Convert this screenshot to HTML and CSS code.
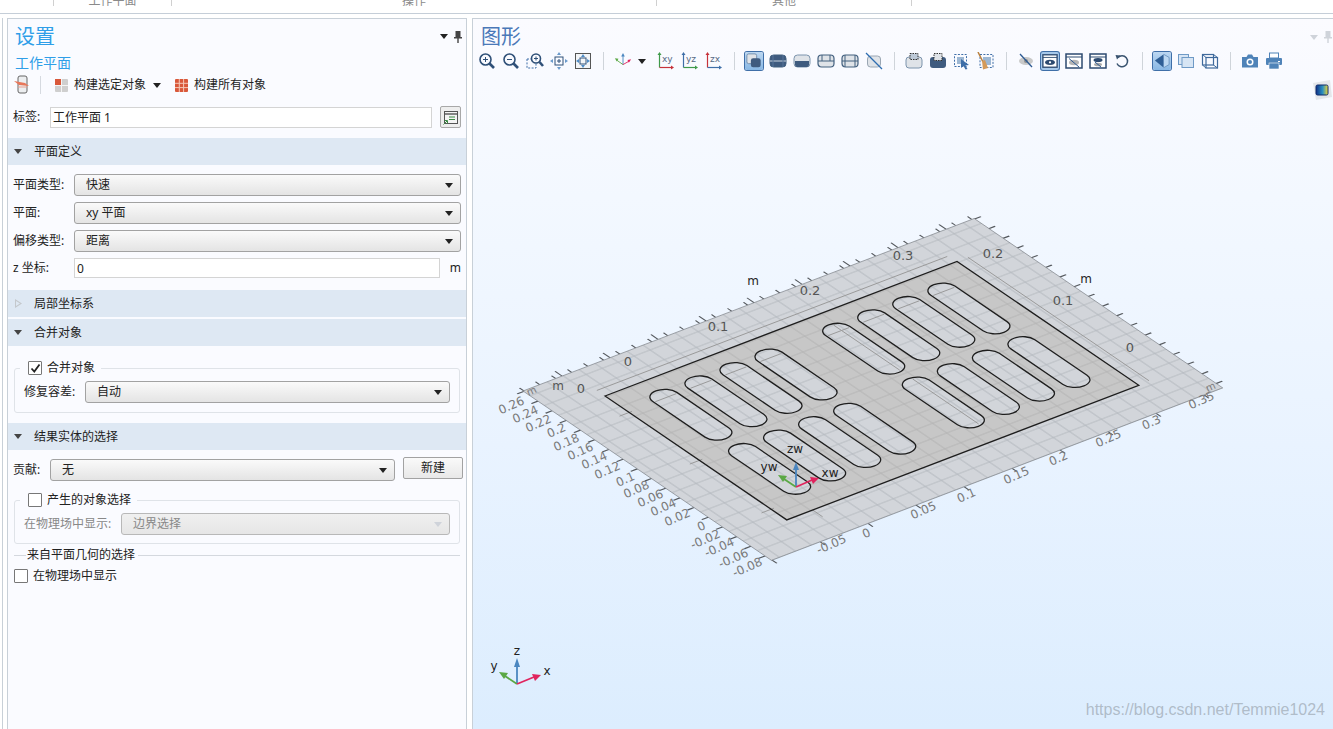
FILE: index.html
```html
<!DOCTYPE html>
<html lang="zh-CN">
<head>
    <meta charset="UTF-8">
    <meta name="viewport" content="width=device-width, initial-scale=1.0">
    <title>工作平面 - 图形</title>
    <link rel="stylesheet" href="styles.css">
</head>
<body>
    <svg class="defs" width="0" height="0">
        <defs>
            <symbol id="cyl" viewBox="0 0 18 18">
                <rect x="1" y="3" width="16" height="12" rx="3.5" fill="#dfe3e8" stroke="#43607f" stroke-width="1.2"/>
            </symbol>
            <pattern id="sheetGrid" patternUnits="userSpaceOnUse" x="-4.98" y="-4.81" width="1.667" height="2">
                <rect width="1.667" height="2" fill="#d2d5da"/>
                <path d="M0 1H1.667M0.833 0V2" stroke="#b4b9bf" stroke-width="0.1" fill="none"/>
            </pattern>
            <pattern id="plateGrid" patternUnits="userSpaceOnUse" x="-4.98" y="-4.81" width="1.667" height="2">
                <rect width="1.667" height="2" fill="#c7c7c7"/>
                <path d="M0 1H1.667M0.833 0V2" stroke="#b4b4b4" stroke-width="0.1" fill="none"/>
            </pattern>
        </defs>
    </svg>

    <div class="ribbon">
        <div class="ribbon-cell cell-a"></div>
        <div class="ribbon-cell cell-b"><span>工作平面</span></div>
        <div class="ribbon-cell cell-c"><span>操作</span></div>
        <div class="ribbon-cell cell-d"><span>其他</span></div>
        <div class="ribbon-cell cell-e"></div>
    </div>

    <div class="workspace">
        <div class="sliver"></div>

        <div class="settings">
            <div class="panel-head">
                <h1>设置</h1>
                <div class="panel-tools">
                    <i class="caret dark"></i>
                    <svg width="8" height="12" viewBox="0 0 8 12"><path d="M1.5 0H6.5V6H8V7.500H4.700V12H3.300V7.500H0V6H1.500Z" fill="#444"/></svg>
                </div>
            </div>
            <h2>工作平面</h2>

            <div class="build-bar">
                <svg class="build-first" width="16" height="20" viewBox="0 0 16 20">
                    <rect x="4" y="1" width="9" height="17" rx="2" fill="#eceef0" stroke="#666"/>
                    <path d="M0 6L11 8L15 11L5 10Z" fill="#e8775a"/>
                    <path d="M4 12H13" stroke="#e8a090"/>
                </svg>
                <span class="build-sep"></span>
                <svg width="13" height="13" viewBox="0 0 13 13">
                    <rect width="13" height="13" rx="1" fill="#cfcfcf"/>
                    <path d="M0 0H6V6H0Z" fill="#d9583a"/>
                    <path d="M6.500 0V13M0 6.500H13" stroke="#f4f4f4"/>
                </svg>
                <span class="build-text">构建选定对象</span>
                <i class="caret dark build-caret"></i>
                <svg class="build-all" width="13" height="13" viewBox="0 0 13 13">
                    <rect width="13" height="13" rx="1" fill="#d9583a"/>
                    <path d="M4.300 0V13M8.600 0V13M0 4.300H13M0 8.600H13" stroke="#f6c8b8"/>
                </svg>
                <span class="build-text">构建所有对象</span>
            </div>

            <div class="row row-label">
                <label class="lbl-short">标签:</label>
                <div class="field grow">工作平面 1</div>
                <div class="note-btn">
                    <svg width="15" height="15" viewBox="0 0 15 15">
                        <rect x="1.500" y="1.500" width="13" height="12" fill="#f4f4f4" stroke="#555"/>
                        <path d="M1.500 4H14.500" stroke="#555" stroke-width="1.400"/>
                        <path d="M6 7H12M6 9.500H12" stroke="#3d8a45"/>
                        <path d="M0.500 14.500L4 11M1.500 10.500H4.500V13.500" stroke="#3d8a45" fill="none"/>
                    </svg>
                </div>
            </div>

            <div class="section-head first"><i class="tri-down"></i>平面定义</div>
            <div class="form">
                <div class="row">
                    <label class="lbl">平面类型:</label>
                    <div class="select grow">快速<i class="caret dark"></i></div>
                </div>
                <div class="row">
                    <label class="lbl">平面:</label>
                    <div class="select grow">xy 平面<i class="caret dark"></i></div>
                </div>
                <div class="row">
                    <label class="lbl">偏移类型:</label>
                    <div class="select grow">距离<i class="caret dark"></i></div>
                </div>
                <div class="row row-z">
                    <label class="lbl">z 坐标:</label>
                    <div class="field grow z-field">0</div>
                    <span class="unit">m</span>
                </div>
            </div>

            <div class="section-head local"><i class="tri-right"></i>局部坐标系</div>
            <div class="section-head merge"><i class="tri-down"></i>合并对象</div>

            <div class="group merge-group">
                <div class="legend">
                    <span class="check on">
                        <svg width="11" height="11" viewBox="0 0 11 11"><path d="M1.500 5.500L4.300 8.500L9.500 1.500" fill="none" stroke="#222" stroke-width="1.800"/></svg>
                    </span>
                    合并对象
                </div>
                <div class="row">
                    <label class="lbl-repair">修复容差:</label>
                    <div class="select grow">自动<i class="caret dark"></i></div>
                </div>
            </div>

            <div class="section-head result"><i class="tri-down"></i>结果实体的选择</div>
            <div class="row row-contrib">
                <label class="lbl-short">贡献:</label>
                <div class="select grow sel-none">无<i class="caret dark"></i></div>
                <div class="btn">新建</div>
            </div>

            <div class="group select-group">
                <div class="legend"><span class="check"></span>产生的对象选择</div>
                <div class="row">
                    <label class="lbl-phys">在物理场中显示:</label>
                    <div class="select grow disabled">边界选择<i class="caret pale"></i></div>
                </div>
            </div>

            <div class="divider-title"><span>来自平面几何的选择</span></div>
            <div class="check-row"><span class="check"></span>在物理场中显示</div>
        </div>

        <div class="graphics">
            <svg class="scene" width="861" height="711" viewBox="472 18 861 711">
                <g transform="matrix(9.6 -3.67 7.1 4.84 605 396)">
                    <g class="ticks">
                        <line x1="-4.98" y1="-5.1" x2="42" y2="-5.1" stroke-width="0.6" stroke-dasharray="0.13 1.537"/>
                        <line x1="-0.98" y1="-5.3" x2="42" y2="-5.3" stroke-width="1" stroke-dasharray="0.13 4.87"/>
                        <line x1="42.3" y1="-4.81" x2="42.3" y2="30.19" stroke-width="0.7" stroke-dasharray="0.17 1.83"/>
                        <line x1="-5.3" y1="-4.81" x2="-5.3" y2="30.19" stroke-width="0.7" stroke-dasharray="0.17 1.83"/>
                        <line x1="-4.98" y1="30.5" x2="42" y2="30.5" stroke-width="0.7" stroke-dasharray="0.13 4.87"/>
                    </g>
                    <rect class="sheet" x="-4.98" y="-4.81" width="47" height="35" fill="url(#sheetGrid)"/>
                    <path class="ruler" d="M0 -1.15H36.500M37.800 0V25.500"/>
                    <rect class="plate" x="0" y="0" width="36.670" height="25.600" fill="url(#plateGrid)"/>
                    <g class="slots">
                        <rect x="2.650" y="1.900" width="2.500" height="9.850" rx="1.250" ry="1.250"/>
                        <rect x="6.300" y="1.900" width="2.500" height="9.850" rx="1.250" ry="1.250"/>
                        <rect x="9.950" y="1.900" width="2.500" height="9.850" rx="1.250" ry="1.250"/>
                        <rect x="13.600" y="1.900" width="2.500" height="9.850" rx="1.250" ry="1.250"/>
                        <rect x="2.600" y="13.050" width="2.500" height="9.850" rx="1.250" ry="1.250"/>
                        <rect x="6.250" y="13.050" width="2.500" height="9.850" rx="1.250" ry="1.250"/>
                        <rect x="9.900" y="13.050" width="2.500" height="9.850" rx="1.250" ry="1.250"/>
                        <rect x="13.550" y="13.050" width="2.500" height="9.850" rx="1.250" ry="1.250"/>
                        <rect x="20.650" y="1.900" width="2.500" height="9.850" rx="1.250" ry="1.250"/>
                        <rect x="24.300" y="1.900" width="2.500" height="9.850" rx="1.250" ry="1.250"/>
                        <rect x="27.950" y="1.900" width="2.500" height="9.850" rx="1.250" ry="1.250"/>
                        <rect x="31.610" y="1.900" width="2.500" height="9.850" rx="1.250" ry="1.250"/>
                        <rect x="20.700" y="13.050" width="2.500" height="9.850" rx="1.250" ry="1.250"/>
                        <rect x="24.350" y="13.050" width="2.500" height="9.850" rx="1.250" ry="1.250"/>
                        <rect x="28" y="13.050" width="2.500" height="9.850" rx="1.250" ry="1.250"/>
                        <rect x="31.700" y="13.050" width="2.500" height="9.850" rx="1.250" ry="1.250"/>
                    </g>
                    <path class="ruler" d="M2.800 3.300H5M6.450 3.300H8.650M10.100 3.300H12.300M13.750 3.300H15.950M20.800 3.300H23M24.450 3.300H26.650M28.100 3.300H30.300M31.750 3.300H33.950M22.200 2.200V11.500M22.200 13.300V22.600"/>
                    <path class="ruler" d="M-1 3.400H0.300M-1 13.300H0.300M-1 23.400H0.300M2.700 25.600V27"/>
                    <rect class="plate-edge" x="0" y="0" width="36.670" height="25.600"/>
                </g>

                <g class="tick-label">
                    <text x="628" y="366">0</text><text x="718" y="331">0.1</text><text x="810" y="295">0.2</text><text x="903" y="260">0.3</text>
                    <text x="993" y="258">0.2</text><text x="1063" y="305">0.1</text><text x="1130" y="352">0</text><text x="581" y="393">0</text>
                    <text x="558" y="390" class="small">m</text>
                </g>
                <g class="tick-label rotated">
                    <text transform="translate(513 409) rotate(-24)">0.26</text>
                    <text transform="translate(527 418) rotate(-24)">0.24</text>
                    <text transform="translate(540 427) rotate(-24)">0.22</text>
                    <text transform="translate(558 434) rotate(-24)">0.2</text>
                    <text transform="translate(568 446) rotate(-24)">0.18</text>
                    <text transform="translate(582 455) rotate(-24)">0.16</text>
                    <text transform="translate(596 464) rotate(-24)">0.14</text>
                    <text transform="translate(609 474) rotate(-24)">0.12</text>
                    <text transform="translate(627 483) rotate(-24)">0.1</text>
                    <text transform="translate(638 493) rotate(-24)">0.08</text>
                    <text transform="translate(652 502) rotate(-24)">0.06</text>
                    <text transform="translate(665 511) rotate(-24)">0.04</text>
                    <text transform="translate(679 521) rotate(-24)">0.02</text>
                    <text transform="translate(703 530) rotate(-24)">0</text>
                    <text transform="translate(707 543) rotate(-24)">-0.02</text>
                    <text transform="translate(721 551) rotate(-24)">-0.04</text>
                    <text transform="translate(735 562) rotate(-24)">-0.06</text>
                    <text transform="translate(749 571) rotate(-24)">-0.08</text>
                    <text transform="translate(833 548) rotate(-24)">-0.05</text>
                    <text transform="translate(868 537) rotate(-24)">0</text>
                    <text transform="translate(925 514) rotate(-24)">0.05</text>
                    <text transform="translate(968 499) rotate(-24)">0.1</text>
                    <text transform="translate(1018 479) rotate(-24)">0.15</text>
                    <text transform="translate(1060 462) rotate(-24)">0.2</text>
                    <text transform="translate(1110 442) rotate(-24)">0.25</text>
                    <text transform="translate(1153 426) rotate(-24)">0.3</text>
                    <text transform="translate(1203 404) rotate(-24)">0.35</text>
                    <text transform="translate(533 394) rotate(-24)" class="tiny">m</text>
                    <text transform="translate(1212 390) rotate(-24)" class="tiny">m</text>
                </g>
                <g class="axis-label">
                    <text x="753" y="285">m</text><text x="1086" y="283">m</text>
                    <text x="795" y="453">zw</text><text x="769" y="471">yw</text><text x="830" y="477">xw</text>
                    <text x="517" y="655">z</text><text x="494" y="670">y</text><text x="547" y="675">x</text>
                </g>

                <g class="triad">
                    <path d="M796 487V468" stroke="#4a86c0"/><path d="M796 462L799 470H793Z" fill="#4a86c0"/>
                    <path d="M796 487L784 479" stroke="#5aa845"/><path d="M778 475L787 476L783 482Z" fill="#5aa845"/>
                    <path d="M796 487L812 480" stroke="#e0245e"/><path d="M819 478L813 484L810 477Z" fill="#e0245e"/>
                    <path d="M517 684V665" stroke="#4a86c0"/><path d="M517 658L520 667H514Z" fill="#4a86c0"/>
                    <path d="M517 684L505 676" stroke="#5aa845"/><path d="M499 672L508 673L504 679Z" fill="#5aa845"/>
                    <path d="M517 684L534 677" stroke="#e0245e"/><path d="M541 675L535 681L532 674Z" fill="#e0245e"/>
                </g>
            </svg>

            <div class="graphics-head">
                <h1>图形</h1>
                <div class="panel-tools pale-tools">
                    <i class="caret pale"></i>
                    <svg width="8" height="12" viewBox="0 0 8 12"><path d="M1.5 0H6.5V6H8V7.500H4.700V12H3.300V7.500H0V6H1.500Z" fill="#cfd3da"/></svg>
                </div>
            </div>

            <div class="toolbar">
                <span class="tool"><svg viewBox="0 0 18 18"><circle cx="7.500" cy="7.500" r="5.500" class="ln"/><path d="M11.500 11.500L16 16" class="hd"/><path d="M5 7.500H10M7.500 5V10" class="ln thin"/></svg></span>
                <span class="tool"><svg viewBox="0 0 18 18"><circle cx="7.500" cy="7.500" r="5.500" class="ln"/><path d="M11.500 11.500L16 16" class="hd"/><path d="M5 7.500H10" class="ln thin"/></svg></span>
                <span class="tool"><svg viewBox="0 0 18 18"><rect x="1" y="7" width="9" height="9" class="dash"/><circle cx="10" cy="6.500" r="4.500" class="ln wh"/><path d="M13.500 10L17 14" class="hd"/><path d="M8 6.500H12M10 4.500V8.500" class="ln thin"/></svg></span>
                <span class="tool"><svg viewBox="0 0 18 18"><rect x="5" y="5" width="8" height="8" class="ln thin"/><path d="M7 9H11M9 7V11" class="ln thin"/><path d="M9 0L11 3H7ZM9 18L7 15H11ZM0 9L3 7V11ZM18 9L15 11V7Z" fill="#6a9acb"/></svg></span>
                <span class="tool"><svg viewBox="0 0 18 18"><rect x="1.500" y="1.500" width="15" height="15" fill="#f3f5f8" stroke="#555"/><rect x="6" y="6" width="6" height="6" class="ln thin"/><path d="M9 2L11 5H7ZM9 16L7 13H11ZM2 9L5 7V11ZM16 9L13 11V7Z" fill="#4f8cc7"/></svg></span>
                <span class="sep"></span>
                <span class="tool"><svg viewBox="0 0 20 18"><path d="M10 13V2" stroke="#4a86c0"/><path d="M10 0L12 4H8Z" fill="#4a86c0"/><path d="M10 13L3 8" stroke="#5aa845"/><path d="M1 6L5 6.500L3 9.500Z" fill="#5aa845"/><path d="M10 13L17 9" stroke="#e0245e"/><path d="M19 7L16.500 11L15 8Z" fill="#e0245e"/></svg></span>
                <i class="caret dark axis-caret"></i>
                <span class="tool first-view"><svg viewBox="0 0 18 18"><path class="ax-line" d="M2.500 2V15.500" stroke="#3f9a4a"/><path class="ax-line" d="M2.500 15.500H15" stroke="#c7323a"/><path d="M2.500 0L4.500 3H0.500Z" fill="#3f9a4a"/><path d="M17 15.500L14 17.500V13.500Z" fill="#c7323a"/><text x="5" y="10" class="ax">xy</text></svg></span>
                <span class="tool"><svg viewBox="0 0 18 18"><path class="ax-line" d="M2.500 2V15.500" stroke="#3e6ea8"/><path class="ax-line" d="M2.500 15.500H15" stroke="#3f9a4a"/><path d="M2.500 0L4.500 3H0.500Z" fill="#3e6ea8"/><path d="M17 15.500L14 17.500V13.500Z" fill="#3f9a4a"/><text x="5" y="10" class="ax">yz</text></svg></span>
                <span class="tool"><svg viewBox="0 0 18 18"><path class="ax-line" d="M2.500 2V15.500" stroke="#c7323a"/><path class="ax-line" d="M2.500 15.500H15" stroke="#3e6ea8"/><path d="M2.500 0L4.500 3H0.500Z" fill="#c7323a"/><path d="M17 15.500L14 17.500V13.500Z" fill="#3e6ea8"/><text x="5" y="10" class="ax">zx</text></svg></span>
                <span class="sep"></span>
                <span class="tool on"><svg viewBox="0 0 18 18"><rect x="1" y="1" width="11" height="11" rx="2" fill="#dfe3e8" stroke="#6f8aa8"/><rect x="5.500" y="6" width="11" height="10" rx="2.500" fill="#3f5b7f"/></svg></span>
                <span class="tool"><svg viewBox="0 0 18 18"><rect x="1" y="3" width="16" height="12" rx="3.500" fill="#3f5b7f" stroke="#43607f"/><path d="M1 9H17" stroke="#c9d4e0"/><path d="M4 3V15M14 3V15" stroke="#56749a"/></svg></span>
                <span class="tool"><svg viewBox="0 0 18 18"><rect x="1" y="3" width="16" height="12" rx="3.500" fill="#dfe3e8" stroke="#7d94ad"/><path d="M2 9H16V12.500Q16 15 14 15H4Q2 15 2 12.500Z" fill="#3f5b7f"/></svg></span>
                <span class="tool"><svg viewBox="0 0 18 18"><use href="#cyl"/><path d="M1 9H17M5 3V9M13 3V9" stroke="#43607f"/></svg></span>
                <span class="tool"><svg viewBox="0 0 18 18"><use href="#cyl"/><path d="M1 9H17M4 3V15M14 3V15" stroke="#43607f"/></svg></span>
                <span class="tool"><svg viewBox="0 0 18 18"><rect x="2.500" y="4" width="13" height="11" rx="3" fill="#dfe3e8" stroke="#9aa6b3"/><path d="M1 1L17 17" stroke="#2d6cb0" stroke-width="1.300"/></svg></span>
                <span class="sep"></span>
                <span class="tool"><svg viewBox="0 0 18 18"><rect x="1" y="5" width="16" height="11" rx="3" fill="#dfe3e8" stroke="#7d94ad"/><rect x="5" y="1.500" width="8" height="6" fill="#bcc8d6" stroke="#333" stroke-dasharray="1.500 1"/></svg></span>
                <span class="tool"><svg viewBox="0 0 18 18"><rect x="1" y="5" width="16" height="11" rx="3" fill="#3f5b7f"/><rect x="5" y="1.500" width="8" height="7" fill="#dfe3e8" stroke="#333" stroke-dasharray="1.500 1"/></svg></span>
                <span class="tool"><svg viewBox="0 0 18 18"><rect x="1.500" y="2.500" width="12" height="12" class="dash"/><rect x="4" y="5" width="7" height="7" fill="#9db7d3"/><path d="M8 7L16 13L12.500 13.500L14.500 17L12.500 17.500L10.500 14L8 16Z" fill="#3e6ea8"/></svg></span>
                <span class="tool"><svg viewBox="0 0 18 18"><rect x="3" y="2.500" width="13" height="13" class="dash"/><rect x="6" y="5" width="8" height="8" fill="#9db7d3"/><path d="M1 0L6 10" stroke="#b9803f" stroke-width="1.500"/><path d="M5 9L8 8L11 16L6 17.500Z" fill="#d49a5a"/></svg></span>
                <span class="sep"></span>
                <span class="tool"><svg viewBox="0 0 18 18"><ellipse cx="9" cy="9" rx="7" ry="4" fill="#c9c9c9"/><circle cx="9" cy="9" r="2" fill="#8f8f8f"/><path d="M3 2L15 15" stroke="#2d5a92" stroke-width="1.300"/></svg></span>
                <span class="tool on dark-frame"><svg viewBox="0 0 18 18"><rect x="1" y="2" width="16" height="14" fill="#fff" stroke="#2d4a70" stroke-width="1.500"/><path d="M1 5H17" stroke="#2d4a70"/><ellipse cx="9" cy="10.500" rx="5.500" ry="3" fill="#2d4a70"/><circle cx="9" cy="10.500" r="1.300" fill="#fff"/></svg></span>
                <span class="tool"><svg viewBox="0 0 18 18"><rect x="1" y="2" width="16" height="14" fill="#fff" stroke="#2d4a70" stroke-width="1.500"/><path d="M1 5H17" stroke="#2d4a70"/><ellipse cx="9" cy="10.500" rx="5" ry="2.800" fill="#b5b5b5"/><path d="M4 6.500L14 15" stroke="#2d5a92"/></svg></span>
                <span class="tool"><svg viewBox="0 0 18 18"><rect x="1" y="2" width="16" height="14" fill="#fff" stroke="#2d4a70" stroke-width="1.500"/><path d="M1 5H17" stroke="#2d4a70"/><ellipse cx="9" cy="8" rx="4.500" ry="2" fill="#2d4a70"/><ellipse cx="9" cy="12.500" rx="4" ry="1.800" fill="#aaa"/><path d="M6 10L12 15" stroke="#2d5a92"/></svg></span>
                <span class="tool"><svg viewBox="0 0 18 18"><path d="M5 5.500A5.500 5.500 0 1 1 4 11.500" fill="none" stroke="#39536f" stroke-width="1.500"/><path d="M2.500 3L7.500 3.500L4 7.500Z" fill="#39536f"/></svg></span>
                <span class="sep"></span>
                <span class="tool on"><svg viewBox="0 0 18 18"><path d="M1 8.500L11 1.500V16.500Z" fill="#2f5f96"/><path d="M11 1.500L17 5V13L11 16.500" fill="#bcd8f2" stroke="#6b94bd"/><rect x="5" y="7" width="5" height="4" fill="#2f5f96"/></svg></span>
                <span class="tool"><svg viewBox="0 0 18 18"><rect x="1.500" y="2.500" width="10" height="10" fill="#d7e5f4" stroke="#6f9ac6"/><rect x="5" y="5.500" width="11.500" height="10" fill="#d7e5f4" stroke="#6f9ac6"/></svg></span>
                <span class="tool"><svg viewBox="0 0 18 18"><rect x="1.500" y="2.500" width="11" height="10.500" fill="none" stroke="#3f6a9c" stroke-width="1.200"/><rect x="5" y="5.500" width="11.500" height="10.500" fill="none" stroke="#3f6a9c" stroke-width="1.200"/><path d="M1.500 2.500L5 5.500M12.500 2.500L16.500 5.500M1.500 13L5 16M12.500 13L16.500 16" stroke="#3f6a9c"/></svg></span>
                <span class="sep"></span>
                <span class="tool"><svg viewBox="0 0 18 18"><path d="M1 5H5.500L7 2.500H11L12.500 5H17V15.500H1Z" fill="#4f83b8"/><circle cx="9" cy="10" r="3.500" fill="#fff"/><circle cx="9" cy="10" r="2" fill="#4f83b8"/></svg></span>
                <span class="tool"><svg viewBox="0 0 18 18"><rect x="4.500" y="1" width="9" height="5" fill="#fff" stroke="#4f83b8"/><rect x="1" y="6" width="16" height="7" rx="1" fill="#4f83b8"/><rect x="4" y="11" width="10" height="6" fill="#4f83b8" stroke="#fff" stroke-width="0.600"/><rect x="13" y="9" width="2" height="1" fill="#fff"/></svg></span>
            </div>

            <div class="color-chip">
                <svg width="22" height="22" viewBox="0 0 22 22">
                    <defs>
                        <linearGradient id="chipFill" x1="0" y1="0" x2="1" y2="0">
                            <stop offset="0" stop-color="#0f2f86"/>
                            <stop offset="0.550" stop-color="#2a8fc0"/>
                            <stop offset="1" stop-color="#f2d730"/>
                        </linearGradient>
                    </defs>
                    <path d="M2 4L19 1L21 18L5 21Z" fill="#e4e6ea"/>
                    <rect x="5" y="6" width="12" height="10" rx="1.500" fill="url(#chipFill)" stroke="#0f2b6b"/>
                </svg>
            </div>

            <div class="watermark">https://blog.csdn.net/Temmie1024</div>
        </div>
    </div>
</body>
</html>
```

FILE: styles.css
```css
* {
    box-sizing: border-box;
}
html, body {
    margin: 0;
    height: 100%;
    overflow: hidden;
}
body {
    background: #ffffff;
    color: #222;
    font-family: "Noto Sans", "Noto Sans CJK SC", sans-serif;
    font-size: 12px;
    line-height: 16px;
}
h1, h2 {
    margin: 0;
    font-weight: normal;
}
.defs {
    position: absolute;
}

/* ribbon, only the cut off bottom is on screen */
.ribbon {
    display: flex;
    height: 14px;
    overflow: hidden;
    border-bottom: 1px solid #c5ced8;
}
.ribbon-cell {
    height: 6px;
    text-align: center;
    color: #8a8a8a;
    border-right: 1px solid #d0d0d0;
}
.ribbon-cell span {
    display: block;
    margin-top: -7px;
}
.cell-a { width: 54px; }
.cell-b { width: 118px; }
.cell-c { width: 485px; }
.cell-d { width: 255px; }
.cell-e { flex: 1; border-right: none; }

.workspace {
    display: flex;
    height: 715px;
    padding-top: 4px;
}
.sliver {
    width: 3px;
    margin-right: 4px;
    border-right: 1px solid #c8d0d8;
}

/* settings panel */
.settings {
    width: 460px;
    margin-right: 5px;
    background: #fafbff;
    border: 1px solid #c8d0d8;
    border-bottom: none;
}
.panel-head {
    display: flex;
    justify-content: space-between;
    align-items: center;
    height: 36px;
    padding: 0 4px 0 7px;
}
.panel-head h1, .graphics-head h1 {
    font-size: 20px;
    line-height: 28px;
    color: #2f9ee8;
}
.panel-tools {
    display: flex;
    align-items: center;
    gap: 6px;
    margin-top: -1px;
}
h2 {
    font-size: 14px;
    line-height: 18px;
    margin-top: -1px;
    padding-left: 7px;
    color: #2f9ee8;
}
.caret {
    display: inline-block;
    width: 0;
    height: 0;
    border-left: 4px solid transparent;
    border-right: 4px solid transparent;
    border-top: 5px solid #333;
}
.caret.dark { border-top-color: #222; }
.caret.pale { border-top-color: #cfd3da; }

.build-bar {
    display: flex;
    align-items: center;
    height: 20px;
    margin-top: 3px;
    padding-left: 6px;
}
.build-sep {
    width: 1px;
    height: 18px;
    margin: 0 14px 0 10px;
    background: #d6dae0;
}
.build-first { flex: none; }
.build-text {
    margin-left: 6px;
}
.build-caret {
    margin-left: 7px;
}
.build-all {
    margin-left: 14px;
}

.row {
    display: flex;
    align-items: center;
}
.grow {
    flex: 1;
    min-width: 0;
}
.row-label {
    height: 24px;
    margin-top: 10px;
    padding: 0 5px;
}
.lbl-short {
    width: 37px;
    flex: none;
}
.lbl {
    width: 61px;
    flex: none;
}
.lbl-repair {
    width: 61px;
    flex: none;
}
.lbl-phys {
    width: 97px;
    flex: none;
    color: #888;
}
.field {
    height: 21px;
    line-height: 19px;
    padding-left: 2px;
    background: #fff;
    border: 1px solid #d4d4d4;
}
.note-btn {
    display: flex;
    align-items: center;
    justify-content: center;
    width: 21px;
    height: 22px;
    margin-left: 8px;
    background: #eeeeee;
    border: 1px solid #a8a8a8;
    border-radius: 2px;
}
.section-head {
    display: flex;
    align-items: center;
    height: 27px;
    background: #dee8f3;
    padding-left: 6px;
}
.section-head.first { margin-top: 9px; }
.section-head.local { margin-top: 12px; }
.section-head.merge { margin-top: 2px; }
.section-head.result { margin-top: 10px; }
.tri-down {
    width: 0;
    height: 0;
    margin-right: 12px;
    border-left: 4px solid transparent;
    border-right: 4px solid transparent;
    border-top: 5px solid #444;
}
.tri-right {
    width: 7px;
    height: 9px;
    margin-right: 12px;
    margin-left: 1px;
    background: #c4c8cc;
    clip-path: polygon(0 0, 100% 50%, 0 100%, 0 0, 1px 2px, 1px 7px, 5px 50%, 1px 2px);
}
.form {
    padding: 9px 5px 0;
}
.form .row {
    margin-bottom: 6px;
}
.select {
    display: flex;
    align-items: center;
    justify-content: space-between;
    height: 22px;
    padding: 0 7px 0 11px;
    background: linear-gradient(#fafafa, #e4e4e4);
    border: 1px solid #a2a2a2;
    border-radius: 3px;
}
.select.disabled {
    color: #888;
    background: linear-gradient(#f0f0f0, #e6e6e6);
    border-color: #b8b8b8;
}
.row-z {
    height: 20px;
}
.form .row-z { margin-bottom: 0; }
.z-field {
    height: 20px;
    padding-left: 2px;
}
.unit {
    width: 21px;
    text-align: right;
}
.group {
    position: relative;
    margin: 0 6px;
    border: 1px solid #dfe3e8;
    border-radius: 3px;
}
.legend {
    position: absolute;
    left: 5px;
    top: -9px;
    display: flex;
    align-items: center;
    gap: 5px;
    padding: 0 6px 0 8px;
    background: #fafbff;
    line-height: 16px;
}
.merge-group {
    height: 45px;
    margin-top: 22px;
    padding: 12px 9px 0;
}
.select-group {
    height: 44px;
    margin-top: 19px;
    padding: 12px 9px 0;
}
.check {
    display: flex;
    align-items: center;
    justify-content: center;
    width: 14px;
    height: 14px;
    background: #fff;
    border: 1px solid #777;
    border-radius: 1px;
}
.row-contrib {
    margin-top: 7px;
    padding: 0 3px 0 5px;
    height: 24px;
    align-items: flex-start;
}
.row-contrib .lbl-short {
    margin-top: 5px;
}
.sel-none {
    margin-top: 2px;
}
.btn {
    width: 60px;
    height: 22px;
    margin-left: 8px;
    line-height: 19px;
    text-align: center;
    background: linear-gradient(#fafafa, #e8e8e8);
    border: 1px solid #a2a2a2;
    border-radius: 2px;
}
.divider-title {
    display: flex;
    align-items: center;
    height: 16px;
    margin: 3px 6px 0;
}
.divider-title::before {
    content: "";
    width: 12px;
    height: 1px;
    background: #d4d8de;
}
.divider-title::after {
    content: "";
    flex: 1;
    height: 1px;
    background: #d4d8de;
}
.divider-title span {
    padding: 0 3px 0 1px;
}
.check-row {
    display: flex;
    align-items: center;
    gap: 5px;
    margin: 5px 0 0 6px;
}

/* graphics window */
.graphics {
    position: relative;
    flex: 1;
    overflow: hidden;
    border: 1px solid #c8d0d8;
    border-bottom: none;
    border-right: none;
    background: linear-gradient(#fbfbff 0, #f3f8ff 25%, #e9f3ff 60%, #dcedfe 100%);
}
.scene {
    position: absolute;
    left: -1px;
    top: -1px;
}
.graphics-head {
    position: relative;
    display: flex;
    justify-content: space-between;
    align-items: center;
    height: 32px;
    padding: 4px 0 0 8px;
}
.graphics-head h1 {
    color: #4a78b8;
}
.pale-tools {
    margin-right: 1px;
    margin-top: 0;
}
.toolbar {
    position: relative;
    display: flex;
    align-items: center;
    height: 20px;
    padding-left: 2px;
}
.tool {
    display: flex;
    align-items: center;
    justify-content: center;
    width: 18px;
    height: 18px;
    margin: 0 3px;
}
.tool svg {
    width: 18px;
    height: 18px;
    display: block;
}
.tool.on {
    background: linear-gradient(#bcd7f1, #88b7e4);
    box-shadow: 0 0 0 1px #3f6fa8;
    border-radius: 2px;
}
.tool.on svg {
    width: 16px;
    height: 16px;
}
.tool.on.dark-frame {
    background: #a6c8ea;
}
.sep {
    width: 1px;
    height: 18px;
    margin: 0 7px 0 8px;
    background: #cfd4da;
}
.axis-caret {
    margin: 0 4px 0 3px;
}
.first-view {
    margin-left: 7px;
}
.ax-line {
    stroke-width: 1.2;
    fill: none;
}
.ln {
    fill: none;
    stroke: #2f5078;
    stroke-width: 1.6;
}
.ln.thin {
    stroke-width: 1;
}
.ln.wh {
    fill: #fafbff;
}
.hd {
    fill: none;
    stroke: #2f5078;
    stroke-width: 2.6;
}
.dash {
    fill: none;
    stroke: #3e6ea8;
    stroke-width: 1;
    stroke-dasharray: 2 1.4;
}
.ax {
    font-family: "DejaVu Sans", sans-serif;
    font-size: 9px;
    fill: #566a85;
}
.color-chip {
    position: absolute;
    top: 60px;
    right: 0;
    width: 22px;
    height: 22px;
}
.watermark {
    position: absolute;
    right: 8px;
    bottom: 9px;
    font-family: "Liberation Sans", sans-serif;
    font-size: 16px;
    line-height: 20px;
    color: rgba(150, 160, 170, 0.65);
}

/* 3d scene, local units are centimetres on the plate */
.ticks line {
    stroke: #55595e;
    fill: none;
}
.sheet {
    stroke: #7b7f85;
    stroke-width: 0.7;
    vector-effect: non-scaling-stroke;
}
.ruler {
    fill: none;
    stroke: #9a9a9a;
    stroke-width: 1;
    vector-effect: non-scaling-stroke;
}
.slots rect {
    fill: url(#sheetGrid);
    stroke: #1e1e1e;
    stroke-width: 1.3;
    vector-effect: non-scaling-stroke;
}
.plate-edge {
    fill: none;
    stroke: #1e1e1e;
    stroke-width: 1.3;
    vector-effect: non-scaling-stroke;
}
.tick-label text {
    font-family: "DejaVu Sans", sans-serif;
    font-size: 13px;
    fill: #555;
    text-anchor: middle;
}
.tick-label.rotated text {
    font-size: 12px;
    fill: #7a7a7a;
}
.tick-label text.tiny {
    font-size: 10px;
}
.tick-label text.small {
    font-size: 12px;
}
.axis-label text {
    font-family: "DejaVu Sans", sans-serif;
    font-size: 12px;
    fill: #222;
    text-anchor: middle;
}
.triad path {
    fill: none;
    stroke-width: 1.8;
}
.triad path[fill] {
    stroke: none;
}
.triad path[fill="#4a86c0"] { fill: #4a86c0; }
.triad path[fill="#5aa845"] { fill: #5aa845; }
.triad path[fill="#e0245e"] { fill: #e0245e; }
```
